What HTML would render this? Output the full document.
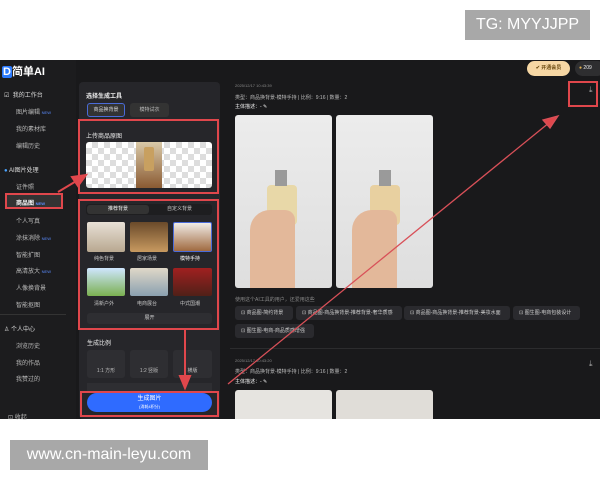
<!DOCTYPE html>
<html><head><meta charset="utf-8"><style>
*{margin:0;padding:0;box-sizing:border-box}
body{width:600px;height:480px;background:#fff;position:relative;overflow:hidden;font-family:"Liberation Sans","Noto Sans CJK SC",sans-serif}
.a{position:absolute}
.t{position:absolute;font-size:6px;color:#c8c8c8;white-space:nowrap}
.sb{position:absolute;left:16px;font-size:6px;color:#bbb;white-space:nowrap}
.chk{background-color:#fff;background-image:linear-gradient(45deg,#ddd 25%,transparent 25%,transparent 75%,#ddd 75%),linear-gradient(45deg,#ddd 25%,transparent 25%,transparent 75%,#ddd 75%);background-size:12px 12px;background-position:0 0,6px 6px}
.red{position:absolute;border:2px solid #e0474c}
.chip{position:absolute;height:14px;background:#2a2a2e;border-radius:3px;font-size:5px;color:#ccc;line-height:14px;padding-left:6px;white-space:nowrap}
</style></head><body>
<div class="a" style="left:465px;top:10px;width:125px;height:30px;background:#a8a8a8;color:#fff;font-size:16px;line-height:30px;text-align:center">TG: MYYJJPP</div>

<div class="a" style="left:0;top:60px;width:600px;height:359px;background:#19191b"></div>
<div class="a" style="left:0;top:60px;width:76px;height:359px;background:#1c1c1e"></div>
<div class="a" style="left:2px;top:63px;font-size:11px;color:#fff;font-weight:bold"><span style="background:#2b7bff;color:#fff;padding:0 1px;border-radius:2px">D</span>简单AI</div>
<div class="sb" style="left:4px;top:90px;color:#ddd">☑ &nbsp;我的工作台</div>
<div class="sb" style="top:107px">图片编辑 <span style="color:#5a8cff;font-size:4px">NEW</span></div>
<div class="sb" style="top:124px">我的素材库</div>
<div class="sb" style="top:141px">编辑历史</div>
<div class="sb" style="left:4px;top:165px;color:#ddd"><span style="color:#4aa3ff">●</span> AI图片处理</div>
<div class="sb" style="top:182px">证件照</div>
<div class="a" style="left:5px;top:193px;width:58px;height:16px;border:2px solid #e0474c;background:#333"></div>
<div class="sb" style="top:198px;color:#fff;font-weight:bold">商品图 <span style="color:#5a8cff;font-size:4px">NEW</span></div>
<div class="sb" style="top:216px">个人写真</div>
<div class="sb" style="top:233px">涂抹消除 <span style="color:#5a8cff;font-size:4px">NEW</span></div>
<div class="sb" style="top:250px">智能扩图</div>
<div class="sb" style="top:266px">高清放大 <span style="color:#5a8cff;font-size:4px">NEW</span></div>
<div class="sb" style="top:283px">人像换背景</div>
<div class="sb" style="top:300px">智能抠图</div>
<div class="a" style="left:0;top:314px;width:66px;height:1px;background:#333"></div>
<div class="sb" style="left:4px;top:324px;color:#ddd">♙ 个人中心</div>
<div class="sb" style="top:341px">浏览历史</div>
<div class="sb" style="top:358px">我的作品</div>
<div class="sb" style="top:374px">我赞过的</div>
<div class="sb" style="left:8px;top:412px">⊡ 收起</div>

<div class="a" style="left:79px;top:82px;width:141px;height:337px;background:#26262a;border-radius:4px"></div>
<div class="t" style="left:86px;top:91px;color:#eee;font-weight:bold">选择生成工具</div>
<div class="a" style="left:87px;top:103px;width:38px;height:14px;border:1px solid #4a6bd8;background:#333;border-radius:3px;font-size:5px;color:#ddd;text-align:center;line-height:12px">商品换背景</div>
<div class="a" style="left:130px;top:103px;width:39px;height:14px;background:#333;border-radius:3px;font-size:5px;color:#bbb;text-align:center;line-height:14px">模特试衣</div>
<div class="red" style="left:78px;top:119px;width:141px;height:75px"></div>
<div class="t" style="left:86px;top:131px;color:#eee">上传商品原图</div>
<div class="a chk" style="left:86px;top:142px;width:126px;height:46px;border-radius:3px"></div>
<div class="a" style="left:136px;top:142px;width:26px;height:46px;background:linear-gradient(#d9c9a8,#8a5a32)"></div>
<div class="a" style="left:144px;top:147px;width:10px;height:24px;background:#c8a060;border-radius:2px"></div>

<div class="red" style="left:78px;top:199px;width:141px;height:131px"></div>
<div class="a" style="left:86px;top:204px;width:126px;height:11px;background:#1e1e20;border-radius:3px"></div>
<div class="a" style="left:87px;top:205px;width:62px;height:9px;background:#333;border-radius:3px;font-size:5px;color:#eee;text-align:center;line-height:9px">推荐背景</div>
<div class="t" style="left:167px;top:205px;font-size:5px">自定义背景</div>
<div class="a" style="left:87px;top:222px;width:38px;height:30px;background:linear-gradient(#e8e0d6,#b8a890);border-radius:2px"></div>
<div class="a" style="left:130px;top:222px;width:38px;height:30px;background:linear-gradient(#6a4a2a,#c89a60);border-radius:2px"></div>
<div class="a" style="left:173px;top:222px;width:39px;height:30px;background:linear-gradient(#f0ece6,#a06a40);border:1px solid #4a6bd8;border-radius:2px"></div>
<div class="t" style="left:94px;top:255px;font-size:5px">纯色背景</div>
<div class="t" style="left:137px;top:255px;font-size:5px">居家场景</div>
<div class="t" style="left:180px;top:255px;font-size:5px;color:#fff">模特手持</div>
<div class="a" style="left:87px;top:268px;width:38px;height:28px;background:linear-gradient(#cfe6ff,#7ab050);border-radius:2px"></div>
<div class="a" style="left:130px;top:268px;width:38px;height:28px;background:linear-gradient(#e0d8c8,#8aa0b0);border-radius:2px"></div>
<div class="a" style="left:173px;top:268px;width:39px;height:28px;background:linear-gradient(#a02020,#502018);border-radius:2px"></div>
<div class="t" style="left:94px;top:300px;font-size:5px">清新户外</div>
<div class="t" style="left:137px;top:300px;font-size:5px">电商展台</div>
<div class="t" style="left:180px;top:300px;font-size:5px">中式国潮</div>
<div class="a" style="left:87px;top:313px;width:125px;height:11px;background:#2e2e32;border-radius:3px;font-size:5px;color:#ccc;text-align:center;line-height:11px">展开</div>

<div class="t" style="left:87px;top:338px;color:#eee">生成比例</div>
<div class="a" style="left:87px;top:350px;width:38px;height:28px;background:#2e2e32;border-radius:3px;font-size:5px;color:#bbb;text-align:center;padding-top:17px">1:1 方形</div>
<div class="a" style="left:130px;top:350px;width:38px;height:28px;background:#2e2e32;border-radius:3px;font-size:5px;color:#bbb;text-align:center;padding-top:17px">1:2 竖版</div>
<div class="a" style="left:173px;top:350px;width:39px;height:28px;background:#2e2e32;border-radius:3px;font-size:5px;color:#bbb;text-align:center;padding-top:17px">横版</div>
<div class="a" style="left:87px;top:383px;width:125px;height:8px;background:#2e2e32"></div>
<div class="red" style="left:80px;top:391px;width:139px;height:26px"></div>
<div class="a" style="left:87px;top:393px;width:125px;height:19px;background:#2f6bff;border-radius:10px;color:#fff;font-size:6px;text-align:center;line-height:8px;padding-top:2px">生成图片<br><span style="font-size:4px">(消耗4积分)</span></div>

<div class="a" style="left:527px;top:61px;width:43px;height:15px;background:#f6d7a4;border-radius:8px;font-size:5px;color:#6a4a10;text-align:center;line-height:15px;font-weight:bold">✔ 开通会员</div>
<div class="a" style="left:575px;top:61px;width:30px;height:15px;background:#2e2e30;border-radius:8px;font-size:5px;color:#eee;line-height:15px;padding-left:4px"><span style="color:#e0b050">●</span> 209</div>
<div class="t" style="left:235px;top:83px;font-size:4px;color:#888">2025/12/17 10:43:39</div>
<div class="t" style="left:235px;top:94px;font-size:5px;color:#bbb">类型：商品换背景-模特手持 | 比例：9:16 | 数量：2</div>
<div class="t" style="left:235px;top:103px;font-size:5px;color:#eee">主体描述：- ✎</div>
<div class="a" style="left:235px;top:115px;width:97px;height:173px;background:linear-gradient(#ececec,#dedede);border-radius:3px"></div>
<div class="a" style="left:336px;top:115px;width:97px;height:173px;background:linear-gradient(#ececec,#dedede);border-radius:3px"></div>
<div class="a" style="left:267px;top:185px;width:30px;height:40px;background:#e8d8a8;border-radius:4px"></div>
<div class="a" style="left:275px;top:170px;width:12px;height:16px;background:#9a9a9a"></div>
<div class="a" style="left:250px;top:210px;width:45px;height:78px;background:#e3b89a;border-radius:20px 10px 0 0"></div>
<div class="a" style="left:370px;top:185px;width:30px;height:40px;background:#e8d0a0;border-radius:4px"></div>
<div class="a" style="left:379px;top:170px;width:12px;height:16px;background:#9a9a9a"></div>
<div class="a" style="left:352px;top:210px;width:45px;height:78px;background:#e3b89a;border-radius:20px 10px 0 0"></div>
<div class="a" style="left:589px;top:85px;font-size:8px;color:#aaa">⤓</div>
<div class="red" style="left:568px;top:81px;width:30px;height:26px"></div>
<div class="t" style="left:235px;top:296px;font-size:5px;color:#888">使用这个AI工具的用户，还爱用这些</div>
<div class="chip" style="left:235px;top:306px;width:58px">⊡ 商品图-简约背景</div>
<div class="chip" style="left:296px;top:306px;width:106px">⊡ 商品图-商品换背景-推荐背景-奢华质感</div>
<div class="chip" style="left:404px;top:306px;width:106px">⊡ 商品图-商品换背景-推荐背景-美妆水面</div>
<div class="chip" style="left:513px;top:306px;width:67px">⊡ 图生图-电商包装设计</div>
<div class="chip" style="left:235px;top:324px;width:79px">⊡ 图生图-电商-商品质感增强</div>
<div class="a" style="left:230px;top:348px;width:370px;height:1px;background:#2c2c2e"></div>
<div class="t" style="left:235px;top:358px;font-size:4px;color:#888">2025/12/17 10:43:20</div>
<div class="t" style="left:235px;top:368px;font-size:5px;color:#bbb">类型：商品换背景-模特手持 | 比例：9:16 | 数量：2</div>
<div class="t" style="left:235px;top:378px;font-size:5px;color:#eee">主体描述：- ✎</div>
<div class="a" style="left:589px;top:359px;font-size:8px;color:#aaa">⤓</div>
<div class="a" style="left:235px;top:390px;width:97px;height:29px;background:#e6e4e0;border-radius:3px 3px 0 0"></div>
<div class="a" style="left:336px;top:390px;width:97px;height:29px;background:#e0ddd8;border-radius:3px 3px 0 0"></div>

<svg class="a" style="left:0;top:0" width="600" height="480">
<g stroke="#e0474c" stroke-width="2" fill="#e0474c">
<line x1="58" y1="192" x2="78" y2="180"/><polygon points="86,175 72,177 78,186"/>
<line x1="185" y1="330" x2="185" y2="378"/><polygon points="180,376 190,376 185,388"/>
</g>
<g stroke="#d85058" stroke-width="1.3" fill="#e0474c">
<line x1="228" y1="384" x2="550" y2="122"/><polygon points="558,116 543,120 550,128"/>
</g>
</svg>

<div class="a" style="left:10px;top:440px;width:198px;height:30px;background:#a8a8a8;color:#fff;font-size:16px;line-height:30px;text-align:center">www.cn-main-leyu.com</div>
</body></html>
